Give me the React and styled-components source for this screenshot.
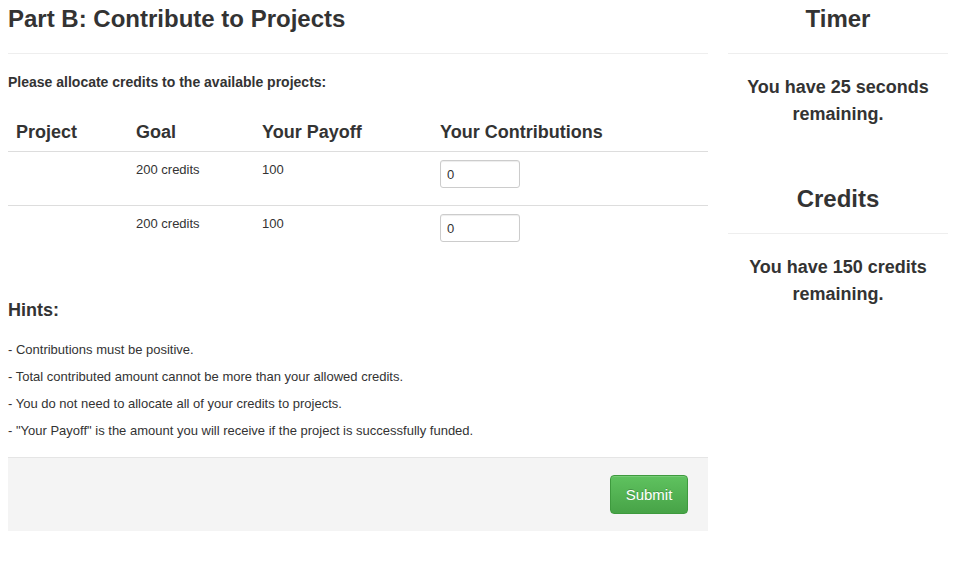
import React from 'react';
import styled, { createGlobalStyle } from 'styled-components';

const GlobalStyle = createGlobalStyle`
  body {
    margin: 0;
    font-family: 'Liberation Sans', Arial, sans-serif;
    font-size: 13px;
    color: #333;
    background: #fff;
  }
  * { box-sizing: border-box; }
`;

const Page = styled.div`
  display: flex;
  gap: 20px;
  padding: 0 10px 0 8px;
`;

const Main = styled.div`
  width: 700px;
  flex: none;
`;

const Side = styled.div`
  width: 220px;
  flex: none;
  text-align: center;
`;

const Heading = styled.h2`
  margin: 0;
  padding-top: 5px;
  height: 54px;
  font-size: 24px;
  font-weight: 700;
  line-height: 28px;
  border-bottom: 1px solid #eee;
`;

const Lead = styled.p`
  margin: 19px 0 0;
  font-weight: 700;
  font-size: 14px;
  line-height: 18px;
`;

const Table = styled.table`
  width: 100%;
  border-collapse: collapse;
  margin-top: 24px;
`;

const Th = styled.th`
  text-align: left;
  font-size: 18px;
  font-weight: 700;
  padding: 6px 8px 8px;
  line-height: 22px;
  width: ${({ w }) => w || 'auto'};
  border-bottom: 1px solid #ddd;
`;

const Td = styled.td`
  vertical-align: top;
  font-size: 13px;
  padding: 10px 8px 0;
  height: 54px;
  line-height: 16px;
  border-top: ${({ first }) => (first ? 'none' : '1px solid #ddd')};
`;

const Input = styled.input`
  width: 80px;
  height: 28px;
  margin-top: -2px;
  padding: 2px 6px;
  font-family: 'Liberation Sans', Arial, sans-serif;
  font-size: 13px;
  color: #333;
  border: 1px solid #ccc;
  border-radius: 3px;
  box-shadow: inset 0 1px 1px rgba(0, 0, 0, 0.075);
`;

const Subhead = styled.h4`
  margin: 39px 0 0;
  font-size: 18px;
  font-weight: 700;
  line-height: 22px;
`;

const Hints = styled.ul`
  list-style: none;
  margin: 15px 0 0;
  padding: 0;
`;

const Hint = styled.li`
  font-size: 13px;
  line-height: 27px;
`;

const Footer = styled.div`
  margin-top: 13px;
  background: #f4f4f4;
  border-top: 1px solid #e5e5e5;
  height: 74px;
  display: flex;
  justify-content: flex-end;
  align-items: flex-start;
  padding: 17px 20px 0;
`;

const SubmitBtn = styled.button`
  width: 78px;
  height: 39px;
  font-family: 'Liberation Sans', Arial, sans-serif;
  font-size: 15px;
  color: #fff;
  background: linear-gradient(#5fc25f, #47a347);
  border: 1px solid #3e9a3e;
  border-radius: 4px;
  text-shadow: 0 -1px 0 rgba(0, 0, 0, 0.2);
  box-shadow: inset 0 1px 0 rgba(255, 255, 255, 0.15);
  cursor: pointer;
`;

const SideTitle = styled.h3`
  margin: 0;
  padding-top: ${({ top }) => top || '5px'};
  height: ${({ h }) => h || '54px'};
  font-size: 24px;
  font-weight: 700;
  line-height: 28px;
  border-bottom: 1px solid #eee;
`;

const SideText = styled.p`
  margin: 20px 0 0;
  font-size: 18px;
  font-weight: 700;
  line-height: 27px;
  padding: 0 10px;
`;

const projects = [
  { goal: '200 credits', payoff: '100', value: '0' },
  { goal: '200 credits', payoff: '100', value: '0' },
];

const hints = [
  '- Contributions must be positive.',
  '- Total contributed amount cannot be more than your allowed credits.',
  '- You do not need to allocate all of your credits to projects.',
  '- "Your Payoff" is the amount you will receive if the project is successfully funded.',
];

export default function App() {
  return (
    <>
      <GlobalStyle />
      <Page>
        <Main>
          <Heading>Part B: Contribute to Projects</Heading>
          <Lead>Please allocate credits to the available projects:</Lead>
          <Table>
            <thead>
              <tr>
                <Th w="120px">Project</Th>
                <Th w="126px">Goal</Th>
                <Th w="178px">Your Payoff</Th>
                <Th>Your Contributions</Th>
              </tr>
            </thead>
            <tbody>
              {projects.map((p, i) => (
                <tr key={i}>
                  <Td first={i === 0}></Td>
                  <Td first={i === 0}>{p.goal}</Td>
                  <Td first={i === 0}>{p.payoff}</Td>
                  <Td first={i === 0}>
                    <Input defaultValue={p.value} />
                  </Td>
                </tr>
              ))}
            </tbody>
          </Table>
          <Subhead>Hints:</Subhead>
          <Hints>
            {hints.map((h, i) => (
              <Hint key={i}>{h}</Hint>
            ))}
          </Hints>
          <Footer>
            <SubmitBtn>Submit</SubmitBtn>
          </Footer>
        </Main>
        <Side>
          <SideTitle>Timer</SideTitle>
          <SideText>You have 25 seconds remaining.</SideText>
          <SideTitle top="57px" h="106px">Credits</SideTitle>
          <SideText>You have 150 credits remaining.</SideText>
        </Side>
      </Page>
    </>
  );
}
